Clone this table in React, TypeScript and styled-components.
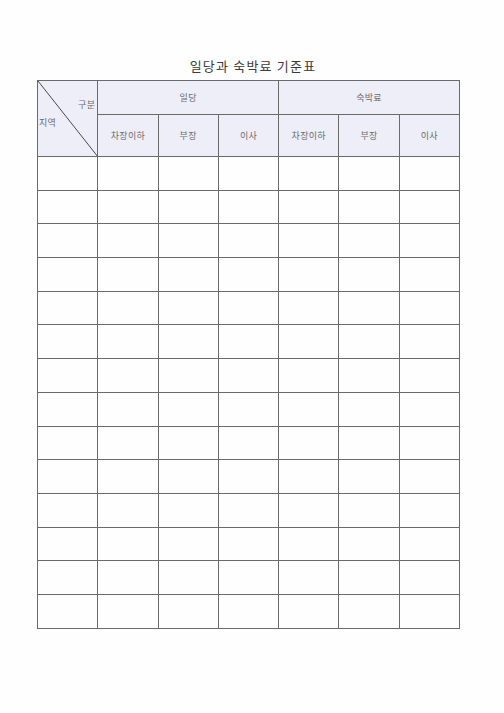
import React from "react";
import styled, { createGlobalStyle } from "styled-components";

const Global = createGlobalStyle`
  html, body { margin: 0; padding: 0; background: #fdfefd; }
  body { font-family: "Noto Sans CJK KR", "Noto Sans", sans-serif; }
`;

const Page = styled.div`
  width: 504px;
  height: 713px;
  padding-top: 56px;
  box-sizing: border-box;
`;

const Title = styled.h1`
  margin: 0 0 4px 0;
  height: 20px;
  line-height: 20px;
  font-size: 13px;
  font-weight: 400;
  letter-spacing: 1.2px;
  color: #3a3a3a;
  text-align: center;
  padding-left: 2px;
`;

const Table = styled.table`
  margin-left: 37px;
  width: 423px;
  border-collapse: collapse;
  table-layout: fixed;
`;

const HeadCell = styled.th<{ $h: number }>`
  height: ${(p) => p.$h}px;
  padding: 0;
  border: 1px solid #6a6a6a;
  background: #eeeef8;
  color: #6a6a6a;
  font-size: 9px;
  font-weight: 400;
  letter-spacing: 0.3px;
  text-align: center;
  vertical-align: middle;
`;

const CornerCell = styled(HeadCell)`
  position: relative;
`;

const Diagonal = styled.svg`
  position: absolute;
  inset: 0;
  width: 100%;
  height: 100%;
  overflow: visible;
  pointer-events: none;
`;

const CornerTop = styled.span`
  position: absolute;
  right: 2px;
  top: 18px;
  line-height: 12px;
`;

const CornerBottom = styled.span`
  position: absolute;
  left: 1px;
  top: 36px;
  line-height: 12px;
`;

const BodyRow = styled.tr`
  height: 33.7px;
`;

const Cell = styled.td`
  padding: 0;
  border: 1px solid #6a6a6a;
  background: #fdfefd;
`;

const subs = ["차장이하", "부장", "이사"];

export default function App() {
  const rows = Array.from({ length: 14 });
  return (
    <Page>
      <Global />
      <Title>일당과 숙박료 기준표</Title>
      <Table>
        <colgroup>
          {Array.from({ length: 7 }).map((_, i) => (
            <col key={i} style={{ width: `${100 / 7}%` }} />
          ))}
        </colgroup>
        <thead>
          <tr>
            <CornerCell $h={33} rowSpan={2}>
              <Diagonal preserveAspectRatio="none" viewBox="0 0 100 100">
                <line
                  x1="0"
                  y1="0"
                  x2="100"
                  y2="100"
                  stroke="#4a4a4a"
                  strokeWidth="1"
                  vectorEffect="non-scaling-stroke"
                />
              </Diagonal>
              <CornerTop>구분</CornerTop>
              <CornerBottom>지역</CornerBottom>
            </CornerCell>
            <HeadCell $h={33} colSpan={3}>일당</HeadCell>
            <HeadCell $h={33} colSpan={3}>숙박료</HeadCell>
          </tr>
          <tr>
            {[...subs, ...subs].map((s, i) => (
              <HeadCell $h={41} key={i}>
                {s}
              </HeadCell>
            ))}
          </tr>
        </thead>
        <tbody>
          {rows.map((_, r) => (
            <BodyRow key={r}>
              {Array.from({ length: 7 }).map((__, c) => (
                <Cell key={c} />
              ))}
            </BodyRow>
          ))}
        </tbody>
      </Table>
    </Page>
  );
}
